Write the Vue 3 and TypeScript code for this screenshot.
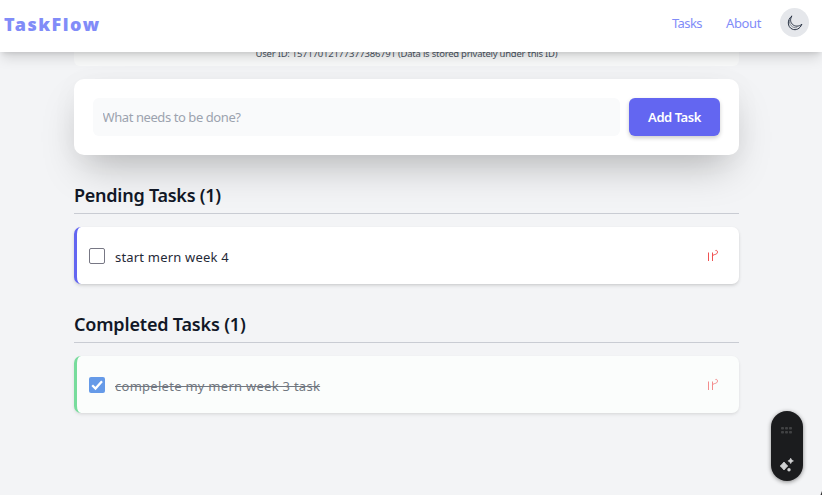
<script setup lang="ts">
import { computed, ref } from 'vue'

interface Task {
  id: number
  text: string
  done: boolean
}

const userId = '15717012177377386791'
const draft = ref('')
const tasks = ref<Task[]>([
  { id: 1, text: 'start mern week 4', done: false },
  { id: 2, text: 'compelete my mern week 3 task', done: true },
])

const sections = computed(() => [
  { key: 'pending', title: 'Pending Tasks', items: tasks.value.filter((t) => !t.done) },
  { key: 'completed', title: 'Completed Tasks', items: tasks.value.filter((t) => t.done) },
])

function addTask() {
  const text = draft.value.trim()
  if (!text) return
  tasks.value.push({ id: Date.now(), text, done: false })
  draft.value = ''
}

function removeTask(id: number) {
  tasks.value = tasks.value.filter((t) => t.id !== id)
}
</script>

<template>
  <div class="page">
    <header class="navbar">
      <div class="brand">TaskFlow</div>
      <nav class="nav">
        <a class="link tasks">Tasks</a>
        <a class="link about">About</a>
        <button class="theme" type="button" aria-label="Toggle theme">
          <svg width="16" height="16" viewBox="0 0 16 16" fill="none" stroke="#273142" stroke-linecap="round" stroke-linejoin="round">
            <path d="M4.7 1.2C-.2 4.5 .3 12 5.2 14.1C9 15.8 13 13.8 14.9 9.2C12 11.8 7.8 11.8 5.3 9.2C3.2 7 3 4 4.7 1.2Z" stroke-width="1" />
            <path d="M2.5 5.3C1.8 9.4 5 13.2 9.7 12.8" stroke-width=".5" />
          </svg>
        </button>
      </nav>
    </header>

    <main class="content">
      <section class="user">
        <p class="user-id">User ID: {{ userId }} (Data is stored privately under this ID)</p>
      </section>

      <form class="composer" @submit.prevent="addTask">
        <input v-model="draft" class="field" type="text" placeholder="What needs to be done?" />
        <button class="add" type="submit"><span>Add Task</span></button>
      </form>

      <section v-for="s in sections" :key="s.key" class="group" :class="s.key">
        <h2 class="title"><span>{{ s.title }} ({{ s.items.length }})</span></h2>
        <article v-for="t in s.items" :key="t.id" class="task">
          <button class="check" type="button" role="checkbox" :aria-checked="t.done" @click="t.done = !t.done">
            <svg v-if="t.done" width="16" height="16" viewBox="0 0 16 16" fill="none" stroke="#fff" stroke-width="2.3">
              <path d="M3.2 8.2L6.5 11.5L13 4.2" />
            </svg>
          </button>
          <span class="text">{{ t.text }}</span>
          <button class="remove" type="button" aria-label="Delete task" @click="removeTask(t.id)">
            <svg width="12" height="14" viewBox="0 0 12 14" fill="none" stroke="#f05252" stroke-width="1">
              <path d="M1.5 3.5V12M5.5 3.5V12M5.5 7.2C6.2 5.3 7.3 5.8 8.7 5.3C10.3 4.8 10.9 3.2 10.2 2C9.8 1.3 9 1.2 8.4 1.6" />
            </svg>
          </button>
        </article>
      </section>
    </main>

    <aside class="widget">
      <svg width="32" height="70" viewBox="0 0 32 70">
        <g fill="#414244">
          <rect x="10" y="16" width="3" height="2.6" rx=".8" />
          <rect x="14" y="16" width="3" height="2.6" rx=".8" />
          <rect x="18" y="16" width="3" height="2.6" rx=".8" />
          <rect x="10" y="20" width="3" height="2.6" rx=".8" />
          <rect x="14" y="20" width="3" height="2.6" rx=".8" />
          <rect x="18" y="20" width="3" height="2.6" rx=".8" />
        </g>
        <g fill="#d0d1d2">
          <path d="M13 51Q14.4 53 16.8 55Q14.4 57 13 59Q11.6 57 9.2 55Q11.6 53 13 51Z" stroke="#d0d1d2" stroke-width=".8" stroke-linejoin="round" />
          <path d="M19.7 47.1Q20.2 49.4 22.5 49.9Q20.2 50.4 19.7 52.7Q19.2 50.4 16.9 49.9Q19.2 49.4 19.7 47.1Z" stroke="#d0d1d2" stroke-width=".5" />
          <circle cx="18" cy="58.7" r="1.7" />
        </g>
      </svg>
    </aside>
    <svg class="corner" width="2" height="4" viewBox="0 0 2 4"><path d="M2 0V4H.5Z" fill="#333" /></svg>
  </div>
</template>

<style>
body {
  background: #f3f4f6;
  overflow: hidden;
}
</style>

<style scoped>
* {
  box-sizing: border-box;
}
.page {
  height: 495px;
  overflow: hidden;
  background: #f3f4f6;
  color: #111827;
  font-family: 'Noto Sans', 'Open Sans', sans-serif;
  font-size: 13px;
}
button {
  border: 0;
  padding: 0;
  font-family: inherit;
}
.navbar {
  position: relative;
  z-index: 2;
  height: 52px;
  padding: 0 13px 0 4px;
  display: flex;
  align-items: flex-start;
  justify-content: space-between;
  background: #fff;
  box-shadow: 0 8px 12px -2px rgb(0 0 0 / 13%), 0 3px 5px -2px rgb(0 0 0 / 12%);
}
.brand {
  padding-top: 12px;
  font-size: 18px;
  line-height: 24px;
  font-weight: 900;
  letter-spacing: 1.5px;
  color: #818cf8;
}
.nav {
  display: flex;
  padding-top: 8px;
}
.link {
  color: #818cf8;
  line-height: 30px;
  white-space: nowrap;
}
.tasks {
  width: 54px;
  letter-spacing: -0.6px;
}
.about {
  width: 54px;
  letter-spacing: -0.35px;
}
.theme {
  width: 29px;
  height: 29px;
  border-radius: 50%;
  background: #e5e7eb;
  display: grid;
  place-items: center;
}
.content {
  width: 665px;
  margin-left: 74px;
}
.user {
  height: 14px;
  background: #f9fafa;
  border-radius: 0 0 6px 6px;
  display: flex;
  justify-content: center;
  align-items: flex-end;
}
.user-id {
  margin: 0 0 5px;
  font-size: 9.5px;
  line-height: 14px;
  letter-spacing: -0.24px;
  color: #4b5563;
  white-space: nowrap;
}
.composer {
  position: relative;
  margin-top: 13px;
  height: 76px;
  padding: 19px;
  display: flex;
  gap: 9px;
  background: #fff;
  border-radius: 10px;
  box-shadow: 0 20px 40px -10px rgb(0 0 0 / 25%), 0 3px 30px rgb(0 0 0 / 3%);
}
.field {
  flex: 1;
  min-width: 0;
  border: 0;
  outline: 0;
  border-radius: 6px;
  background: #f9fafb;
  padding: 0 9.5px;
  font: inherit;
  letter-spacing: -0.42px;
}
.field::placeholder {
  color: #9ca3af;
  opacity: 1;
}
.add {
  width: 91px;
  border-radius: 6px;
  background: #6366f1;
  color: #fff;
  font-size: 13px;
  font-weight: 600;
  letter-spacing: -0.45px;
  box-shadow: 0 2px 4px rgb(0 0 0 / 20%);
}
.group {
  margin-top: 28px;
}
.completed {
  margin-top: 27px;
}
.title {
  margin: 0 0 13px;
  height: 31px;
  border-bottom: 1px solid #c9ccd3;
  font-size: 18px;
  line-height: 25px;
  font-weight: 600;
  letter-spacing: -0.25px;
}
.completed .title {
  height: 32px;
  line-height: 27px;
  letter-spacing: -0.17px;
}
.task {
  height: 57px;
  padding: 0 20px 0 12px;
  display: flex;
  align-items: center;
  border-left: 3px solid #6366f1;
  border-radius: 7px;
  background: #fff;
  box-shadow: 0 2px 4px -1px rgb(0 0 0 / 16%), 0 1px 3px rgb(0 0 0 / 5%);
}
.check {
  width: 16px;
  height: 16px;
  border: 1px solid #777784;
  border-radius: 2px;
  background: #fff;
  margin-right: 10px;
}
.text {
  flex: 1;
  padding-top: 2px;
  line-height: 20px;
  letter-spacing: 0.19px;
  color: #1f2937;
}
.completed .task {
  border-left-color: #77dc9c;
  background: #fbfdfc;
  box-shadow: 0 2px 4px -1px rgb(0 0 0 / 10%), 0 1px 3px rgb(0 0 0 / 4%);
}
.completed .check {
  border: 0;
  background: #659ae8;
  display: grid;
}
.completed .text {
  color: #717780;
  letter-spacing: 0.27px;
  text-decoration: line-through;
}
.remove {
  width: 12px;
  height: 14px;
  background: none;
  display: grid;
}
.completed .remove {
  opacity: 0.65;
}
.widget {
  position: absolute;
  left: 771px;
  top: 411px;
  width: 32px;
  height: 70px;
  border-radius: 16px;
  background: #1b1c1e;
  box-shadow: 0 1px 4px rgb(0 0 0 / 45%);
}
.corner {
  position: absolute;
  left: 820px;
  top: 491px;
}
</style>
